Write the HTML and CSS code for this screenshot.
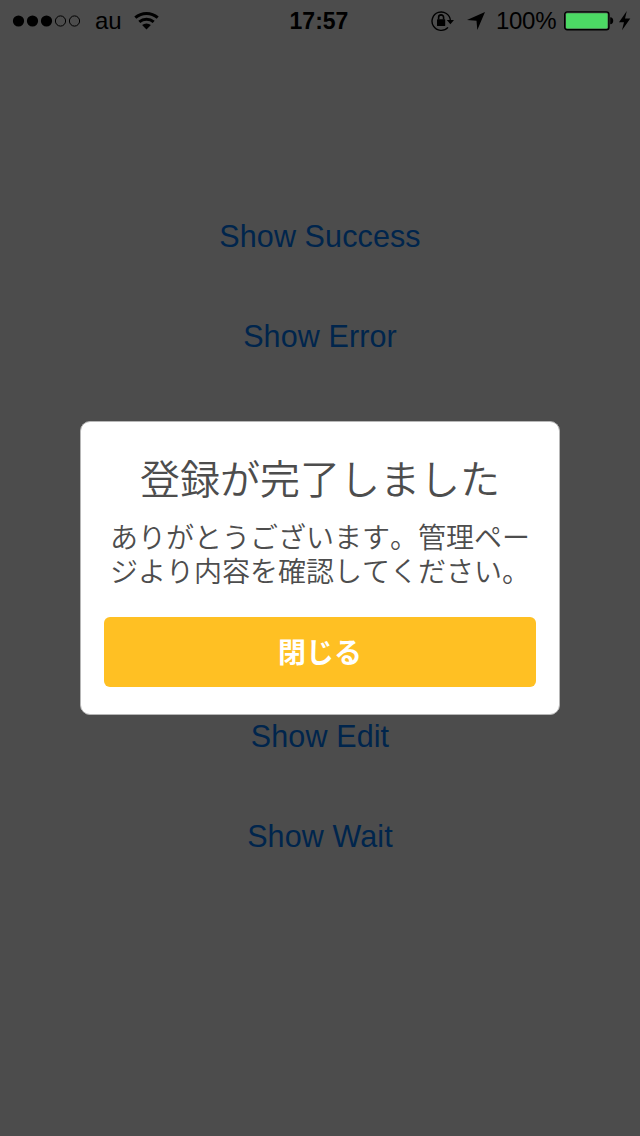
FILE: index.html
```html
<!DOCTYPE html>
<html lang="ja">
<head>
<meta charset="utf-8">
<title>Alert</title>
<link rel="stylesheet" href="styles.css">
</head>
<body>
<div class="screen">
  <header class="status">
    <div class="status-left">
      <svg class="signal" width="70" height="14" viewBox="0 0 70 14">
        <circle cx="6.5" cy="7" r="5.6"/><circle cx="20.5" cy="7" r="5.6"/><circle cx="34.5" cy="7" r="5.6"/>
        <g fill="none" stroke="#000"><circle cx="48.5" cy="7" r="5.1"/><circle cx="62.5" cy="7" r="5.1"/></g>
      </svg>
      <span class="carrier">au</span>
      <svg class="wifi" width="26" height="20" viewBox="0 0 26 20">
        <g fill="none" stroke="#000" stroke-width="3"><path d="M1.3 6.6A17 17 0 0 1 23.7 6.6"/><path d="M5.3 10.9A11 11 0 0 1 19.7 10.9"/></g>
        <path d="M8.1 14.1A6.6 6.6 0 0 1 16.9 14.1L12.5 18.4Z"/>
      </svg>
    </div>
    <div class="clock">17:57</div>
    <div class="status-right">
      <svg class="lock" width="24" height="22" viewBox="0 0 24 22">
        <path d="M17 17.4A9.2 9.2 0 1 1 19.4 10.5" fill="none" stroke="#000" stroke-width="1.4"/>
        <path d="M15.8 10H23L19.4 14.2Z"/>
        <rect x="6" y="9.2" width="8.2" height="6.8" rx=".6"/>
        <path d="M7.6 9.5V7.4A2.5 2.5 0 0 1 12.6 7.4V9.5" fill="none" stroke="#000" stroke-width="1.6"/>
      </svg>
      <svg class="arrow" width="18" height="18" viewBox="0 0 18 18"><path d="M18 0L10.3 18L9.5 8.7L0 8Z"/></svg>
      <span class="percent">100%</span>
      <svg class="battery" width="50" height="20" viewBox="0 0 50 20">
        <rect x=".7" y=".9" width="44.2" height="17.9" rx="2.5" fill="none" stroke="#000" stroke-width="1.4"/>
        <rect x="2" y="2.2" width="41.6" height="15.3" rx="1.2" fill="#4cd964"/>
        <path d="M46.2 6.2Q49.2 6.4 49.2 9.7T46.2 13.2Z"/>
      </svg>
      <svg class="bolt" width="12" height="20" viewBox="0 0 12 20"><path d="M7.8 0L0 11.2H5L3 19.2L11.3 7.4H6Z"/></svg>
    </div>
  </header>
  <nav class="links">
    <span class="link">Show Success</span>
    <span class="link">Show Error</span>
    <span class="link gap-before">Show Edit</span>
    <span class="link">Show Wait</span>
  </nav>
  <section class="alert">
    <h1 class="title">登録が完了しました</h1>
    <p class="message">ありがとうございます。管理ページより内容を確認してください。</p>
    <button class="close">閉じる</button>
  </section>
</div>
</body>
</html>
```
FILE: styles.css
```css
* { box-sizing: border-box; }
body { margin: 0; background: #4c4c4c; }
.screen {
  position: relative;
  width: 640px;
  height: 1136px;
  overflow: hidden;
  background: #4c4c4c;
  font-family: "Liberation Sans", "Noto Sans CJK JP", sans-serif;
}
.status {
  display: grid;
  grid-template-columns: 1fr auto 1fr;
  align-items: center;
  height: 40px;
  padding: 0 9px 0 12px;
  color: #000;
  font-size: 24px;
  line-height: 40px;
}
.status svg { display: block; flex: none; }
.status-left, .status-right { display: flex; align-items: center; height: 40px; }
.status-right { justify-content: flex-end; }
.carrier { margin: 0 0 0 13px; width: 27px; }
.wifi { margin-left: 12px; }
.clock { margin-right: 5px; font-weight: bold; font-size: 23px; padding-top: 1px; }
.lock { margin-right: 12px; }
.arrow { margin-right: 11px; }
.percent { width: 61px; margin: 1px 7px 0 0; letter-spacing: -.3px; }
.battery { margin-right: 5px; }
.links {
  display: flex;
  flex-direction: column;
  align-items: center;
  padding-top: 146px;
}
.link { height: 100px; line-height: 100px; color: #00254c; font-size: 30.5px; letter-spacing: .12px; }
.gap-before { margin-top: 300px; }
.alert {
  position: absolute;
  left: 80px;
  top: 421px;
  width: 480px;
  height: 294px;
  padding: 30px 23px 0;
  border: 1px solid #b7b7b7;
  border-radius: 10px;
  background: #fff;
  color: #4d4d4d;
  font-family: "Noto Sans CJK JP", sans-serif;
}
.title { margin: 0; font-size: 40px; font-weight: 350; line-height: 50px; text-align: center; white-space: nowrap; }
.message { margin: 17px 0 0 6px; width: 425px; font-size: 28px; font-weight: 350; line-height: 34px; font-kerning: none; }
.close {
  display: block;
  width: 432px;
  height: 70px;
  margin-top: 30px;
  padding: 0 0 2px;
  border: 0;
  border-radius: 6px;
  background: #ffc023;
  color: #fff;
  font: bold 28px/68px "Noto Sans CJK JP", sans-serif;
}
```
